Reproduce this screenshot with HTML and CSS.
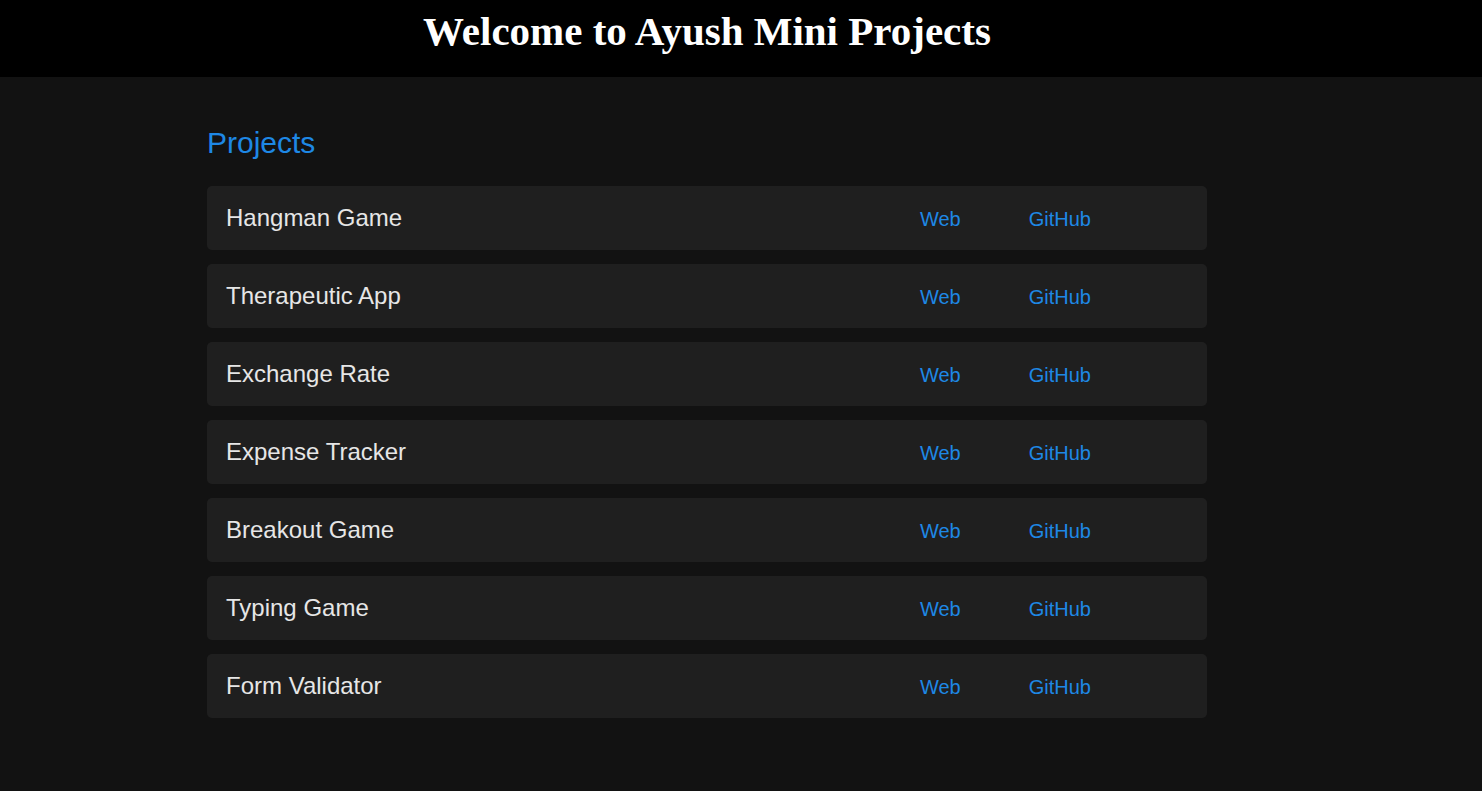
FILE: index.html
```html
<!DOCTYPE html>
<html lang="en">
<head>
<meta charset="utf-8">
<title>Ayush Mini Projects</title>
<link rel="stylesheet" href="styles.css">
</head>
<body>
<header class="site-header">
  <div class="container">
    <h1 class="site-title">Welcome to Ayush Mini Projects</h1>
  </div>
</header>
<main class="container">
  <h2 class="section-title">Projects</h2>
  <ul class="project-list">
    <li class="project"><span class="project-name">Hangman Game</span><div class="links"><a href="#">Web</a><a href="#">GitHub</a></div></li>
    <li class="project"><span class="project-name">Therapeutic App</span><div class="links"><a href="#">Web</a><a href="#">GitHub</a></div></li>
    <li class="project"><span class="project-name">Exchange Rate</span><div class="links"><a href="#">Web</a><a href="#">GitHub</a></div></li>
    <li class="project"><span class="project-name">Expense Tracker</span><div class="links"><a href="#">Web</a><a href="#">GitHub</a></div></li>
    <li class="project"><span class="project-name">Breakout Game</span><div class="links"><a href="#">Web</a><a href="#">GitHub</a></div></li>
    <li class="project"><span class="project-name">Typing Game</span><div class="links"><a href="#">Web</a><a href="#">GitHub</a></div></li>
    <li class="project"><span class="project-name">Form Validator</span><div class="links"><a href="#">Web</a><a href="#">GitHub</a></div></li>
  </ul>
</main>
</body>
</html>
```

FILE: styles.css
```css
* { box-sizing: border-box; }

html, body {
  margin: 0;
  padding: 0;
  background: #121212;
  font-family: "Liberation Sans", Arial, sans-serif;
}

.container {
  width: 1000px;
  margin-left: 207px;
}

.site-header {
  background: #000;
  height: 77px;
}

.site-title {
  margin: 0;
  padding-top: 8px;
  text-align: center;
  font-family: "Liberation Serif", "Times New Roman", serif;
  font-weight: bold;
  font-size: 41px;
  line-height: 46px;
  color: #fff;
}

.section-title {
  margin: 49px 0 26px;
  font-weight: normal;
  font-size: 30px;
  line-height: 34px;
  color: #1e88e5;
}

.project-list {
  list-style: none;
  margin: 0;
  padding: 0;
  display: flex;
  flex-direction: column;
  gap: 14px;
}

.project {
  display: flex;
  align-items: center;
  justify-content: space-between;
  height: 64px;
  padding: 0 116px 0 19px;
  background: #1f1f1f;
  border-radius: 5px;
}

.project-name {
  font-size: 24px;
  color: #e6e6e6;
}

.links {
  display: flex;
  gap: 68px;
  padding-top: 3px;
}

.links a {
  font-size: 20px;
  color: #1e88e5;
  text-decoration: none;
}
```
